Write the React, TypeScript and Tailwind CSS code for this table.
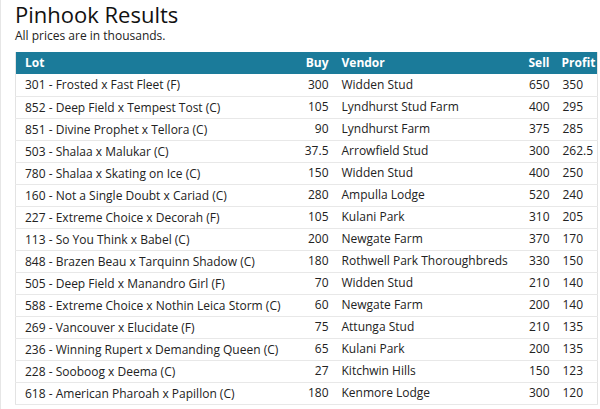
import React from "react";

const rows: [string, string, string, string, string][] = [
  ["301 - Frosted x Fast Fleet (F)", "300", "Widden Stud", "650", "350"],
  ["852 - Deep Field x Tempest Tost (C)", "105", "Lyndhurst Stud Farm", "400", "295"],
  ["851 - Divine Prophet x Tellora (C)", "90", "Lyndhurst Farm", "375", "285"],
  ["503 - Shalaa x Malukar (C)", "37.5", "Arrowfield Stud", "300", "262.5"],
  ["780 - Shalaa x Skating on Ice (C)", "150", "Widden Stud", "400", "250"],
  ["160 - Not a Single Doubt x Cariad (C)", "280", "Ampulla Lodge", "520", "240"],
  ["227 - Extreme Choice x Decorah (F)", "105", "Kulani Park", "310", "205"],
  ["113 - So You Think x Babel (C)", "200", "Newgate Farm", "370", "170"],
  ["848 - Brazen Beau x Tarquinn Shadow (C)", "180", "Rothwell Park Thoroughbreds", "330", "150"],
  ["505 - Deep Field x Manandro Girl (F)", "70", "Widden Stud", "210", "140"],
  ["588 - Extreme Choice x Nothin Leica Storm (C)", "60", "Newgate Farm", "200", "140"],
  ["269 - Vancouver x Elucidate (F)", "75", "Attunga Stud", "210", "135"],
  ["236 - Winning Rupert x Demanding Queen (C)", "65", "Kulani Park", "200", "135"],
  ["228 - Sooboog x Deema (C)", "27", "Kitchwin Hills", "150", "123"],
  ["618 - American Pharoah x Papillon (C)", "180", "Kenmore Lodge", "300", "120"],
];

export default function App() {
  return (
    <div
      className="w-[600px] h-[409px] overflow-hidden bg-white text-[#222] border-l border-[#e6e6e6]"
      style={{ fontFamily: '"Open Sans", "Noto Sans", sans-serif' }}
    >
      <div className="pl-[14px]">
        <h1 className="text-[22px] leading-[29px] font-normal text-[#111]">Pinhook Results</h1>
        <p className="text-[12px] leading-[13px] text-[#222]">All prices are in thousands.</p>
        <table className="mt-[10px] w-[582px] table-fixed border-collapse text-[12px] border-r border-l border-[#e3e3e3]">
          <colgroup>
            <col className="w-[275px]" />
            <col className="w-[41px]" />
            <col className="w-[179px]" />
            <col className="w-[43px]" />
            <col className="w-[44px]" />
          </colgroup>
          <thead>
            <tr className="bg-[#1b7b9a] text-white h-[22px]">
              <th className="text-left font-bold pl-[9px] leading-[22px]">Lot</th>
              <th className="text-right font-bold pr-[3px]">Buy</th>
              <th className="text-left font-bold pl-[10px]">Vendor</th>
              <th className="text-right font-bold pr-[4px]">Sell</th>
              <th className="text-left font-bold pl-[8px] whitespace-nowrap">Profit</th>
            </tr>
          </thead>
          <tbody>
            {rows.map((r, i) => (
              <tr key={i} className="h-[22px] border-b border-[#e8e8e8]">
                <td className="pl-[9px] leading-[21px] whitespace-nowrap">{r[0]}</td>
                <td className="text-right pr-[3px]">{r[1]}</td>
                <td className="pl-[10px] whitespace-nowrap">{r[2]}</td>
                <td className="text-right pr-[4px]">{r[3]}</td>
                <td className="pl-[9px]">{r[4]}</td>
              </tr>
            ))}
          </tbody>
        </table>
      </div>
    </div>
  );
}
